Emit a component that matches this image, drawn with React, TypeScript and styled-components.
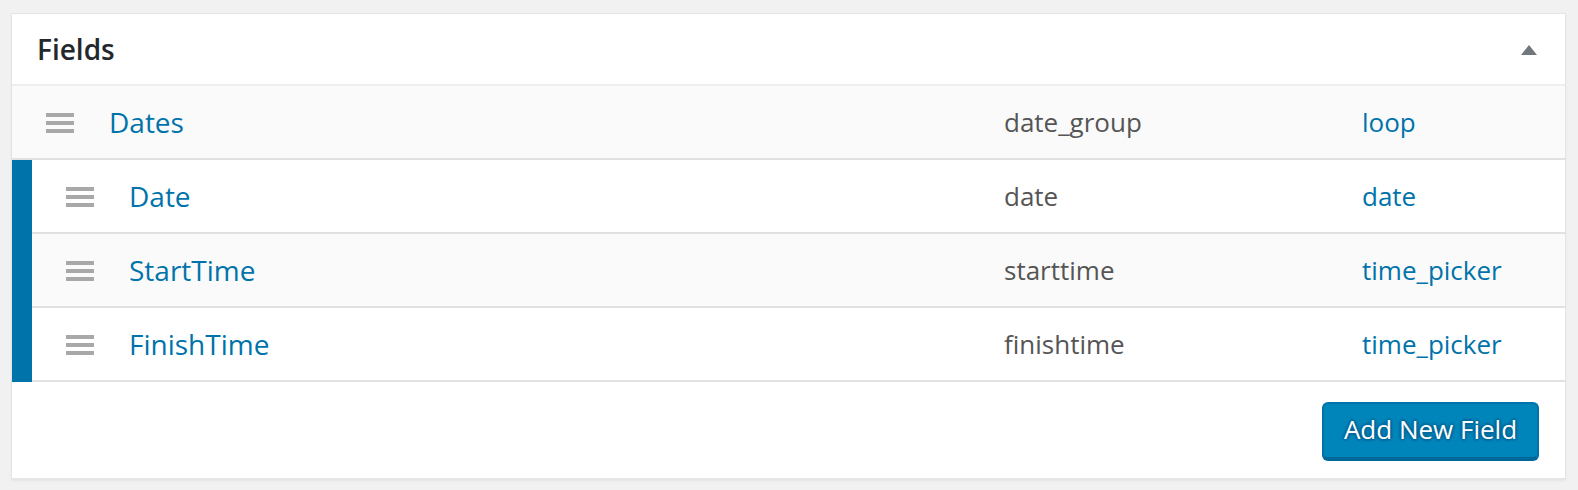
import React from "react";
import styled, { createGlobalStyle } from "styled-components";

const Global = createGlobalStyle`
  html, body { margin: 0; padding: 0; background: #f1f1f1; }
  body { font-family: "Open Sans", "Noto Sans", sans-serif; }
`;

const Page = styled.div`
  padding: 13px 12px 10px 11px;
`;

const Panel = styled.section`
  background: #fff;
  border: 1px solid #e5e5e5;
  box-shadow: 0 2px 2px rgba(0, 0, 0, 0.05);
`;

const Header = styled.header`
  height: 70px;
  display: flex;
  align-items: center;
  justify-content: space-between;
  padding: 0 28px 0 25px;
  border-bottom: 2px solid #eeeeee;
`;

const Title = styled.h2`
  margin: 0;
  font-size: 28px;
  font-weight: 600;
  color: #23282d;
  line-height: 1;
`;

const Toggle = styled.span`
  width: 0;
  height: 0;
  border-left: 8px solid transparent;
  border-right: 8px solid transparent;
  border-bottom: 10px solid #72777c;
  margin-top: 2px;
`;

const Row = styled.div<{ $alt?: boolean }>`
  display: grid;
  grid-template-columns: 1fr 358px 203px;
  align-items: center;
  height: 72px;
  background: ${(p) => (p.$alt ? "#fafafa" : "#fff")};
  border-bottom: 2px solid #e1e1e1;
  font-size: 26px;
`;

const LabelCell = styled.div`
  display: flex;
  align-items: center;
  gap: 35px;
  padding-left: 34px;
  font-size: 28px;
`;

const Handle = styled.span`
  width: 28px;
  height: 20px;
  display: flex;
  flex-direction: column;
  justify-content: space-between;
  margin-top: 2px;
  & > i {
    display: block;
    height: 4px;
    background: #a8a8a8;
  }
`;

const Link = styled.a`
  color: #0073aa;
  text-decoration: none;
`;

const Plain = styled.span`
  color: #555;
`;

const Nested = styled.div`
  border-left: 20px solid #0073aa;
`;

const Footer = styled.footer`
  display: flex;
  justify-content: flex-end;
  padding: 20px 26px 19px 0;
`;

const Button = styled.button`
  height: 57px;
  width: 217px;
  box-sizing: border-box;
  background: #0085ba;
  color: #fff;
  border: 2px solid #0073aa;
  border-bottom-color: #006799;
  border-radius: 6px;
  box-shadow: 0 2px 0 #006799;
  text-shadow: 0 -2px 2px #006799, 2px 0 2px #006799, 0 2px 2px #006799, -2px 0 2px #006799;
  font-family: "Open Sans", sans-serif;
  font-size: 26px;
  padding: 0 0 4px;
  cursor: pointer;
`;

type Field = { label: string; name: string; type: string };

const nested: Field[] = [
  { label: "Date", name: "date", type: "date" },
  { label: "StartTime", name: "starttime", type: "time_picker" },
  { label: "FinishTime", name: "finishtime", type: "time_picker" },
];

const FieldRow = ({ f, alt }: { f: Field; alt?: boolean }) => (
  <Row $alt={alt}>
    <LabelCell>
      <Handle>
        <i />
        <i />
        <i />
      </Handle>
      <Link href="#">{f.label}</Link>
    </LabelCell>
    <Plain>{f.name}</Plain>
    <Link href="#">{f.type}</Link>
  </Row>
);

export default function App() {
  return (
    <Page>
      <Global />
      <Panel>
        <Header>
          <Title>Fields</Title>
          <Toggle />
        </Header>
        <FieldRow f={{ label: "Dates", name: "date_group", type: "loop" }} alt />
        <Nested>
          {nested.map((f, i) => (
            <FieldRow key={f.name} f={f} alt={i % 2 === 1} />
          ))}
        </Nested>
        <Footer>
          <Button>Add New Field</Button>
        </Footer>
      </Panel>
    </Page>
  );
}
